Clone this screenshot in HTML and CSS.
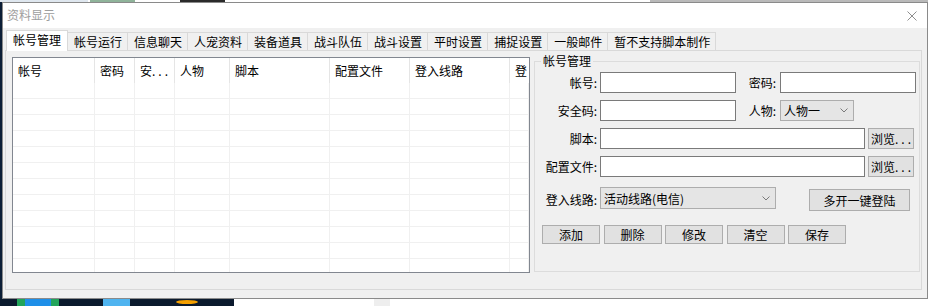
FILE: index.html
```html
<!DOCTYPE html>
<html lang="zh-CN">
<head>
    <meta charset="UTF-8">
    <meta name="viewport" content="width=device-width, initial-scale=1.0">
    <title>资料显示</title>
    <link rel="stylesheet" href="styles.css">
</head>
<body>
    <!-- desktop behind the dialog -->
    <div class="desk">
        <span class="dk dkLeft"></span>
        <span class="dk dkTop1"></span>
        <span class="dk dkTop2"></span>
        <span class="dk dkTop3"></span>
        <span class="dk dkTop4"></span>
        <span class="dk dkBottom"></span>
        <span class="dk icon1"></span>
        <span class="dk icon2"></span>
        <span class="dk icon3"></span>
        <span class="dk dkGray"></span>
    </div>

    <div class="win">
        <div class="titleBar">
            <span class="title">资料显示</span>
            <a href="javascript:;" class="close">
                <svg width="10" height="10" viewBox="0 0 10 10"><path d="M0.5 0.5L9.5 9.5M9.5 0.5L0.5 9.5" stroke="#8e8e8e" stroke-width="1" fill="none"/></svg>
            </a>
        </div>
        <ul class="tabs">
            <li class="on">帐号管理</li>
            <li>帐号运行</li>
            <li>信息聊天</li>
            <li>人宠资料</li>
            <li>装备道具</li>
            <li>战斗队伍</li>
            <li>战斗设置</li>
            <li>平时设置</li>
            <li>捕捉设置</li>
            <li>一般邮件</li>
            <li>暂不支持脚本制作</li>
        </ul>
        <div class="panel">
            <div class="listView">
                <div class="lvHead">
                    <span class="w1">帐号</span>
                    <span class="w2">密码</span>
                    <span class="w3">安<i class="dots">...</i></span>
                    <span class="w4">人物</span>
                    <span class="w5">脚本</span>
                    <span class="w6">配置文件</span>
                    <span class="w7">登入线路</span>
                    <span class="w8">登</span>
                </div>
                <div class="lvBody">
                    <span class="w1"></span>
                    <span class="w2"></span>
                    <span class="w3"></span>
                    <span class="w4"></span>
                    <span class="w5"></span>
                    <span class="w6"></span>
                    <span class="w7"></span>
                    <span class="w8"></span>
                </div>
            </div>
            <fieldset class="group">
                <legend>帐号管理</legend>
                <div class="row first">
                    <label class="lbl">帐号:</label>
                    <input type="text" class="txt">
                    <label class="lbl2">密码:</label>
                    <input type="text" class="txt">
                </div>
                <div class="row">
                    <label class="lbl">安全码:</label>
                    <input type="text" class="txt">
                    <label class="lbl2">人物:</label>
                    <div class="combo role">
                        <span>人物一</span>
                        <svg width="8" height="5" viewBox="0 0 8 5"><path d="M0.5 0.5L4 4L7.5 0.5" stroke="#7a7a7a" fill="none"/></svg>
                    </div>
                </div>
                <div class="row">
                    <label class="lbl">脚本:</label>
                    <input type="text" class="txt long">
                    <button class="btn browse">浏览<i class="dots">...</i></button>
                </div>
                <div class="row">
                    <label class="lbl">配置文件:</label>
                    <input type="text" class="txt long">
                    <button class="btn browse">浏览<i class="dots">...</i></button>
                </div>
                <div class="row lineRow">
                    <label class="lbl">登入线路:</label>
                    <div class="combo line">
                        <span>活动线路(电信)</span>
                        <svg width="8" height="5" viewBox="0 0 8 5"><path d="M0.5 0.5L4 4L7.5 0.5" stroke="#7a7a7a" fill="none"/></svg>
                    </div>
                    <button class="btn multi">多开一键登陆</button>
                </div>
                <div class="ops">
                    <button class="btn">添加</button>
                    <button class="btn">删除</button>
                    <button class="btn">修改</button>
                    <button class="btn">清空</button>
                    <button class="btn">保存</button>
                </div>
            </fieldset>
        </div>
    </div>
</body>
</html>
```

FILE: styles.css
```css
*{
    margin: 0;
    padding: 0;
    box-sizing: border-box;
}
ul{
    list-style: none;
}
a{
    text-decoration: none;
}
i{
    font-style: normal;
}
body{
    width: 932px;
    height: 306px;
    overflow: hidden;
    position: relative;
    background: #fff;
    font: 12px "Noto Sans CJK SC", "Liberation Sans", sans-serif;
    color: #000;
}

/* desktop */
.dk{
    position: absolute;
    display: block;
}
.dkLeft{ left: 0; top: 0; width: 2px; height: 306px; background: #0c1e36; }
.dkTop1{ left: 0; top: 0; width: 88px; height: 2px; background: #dfe7ef; }
.dkTop2{ left: 90px; top: 0; width: 45px; height: 2px; background: #8fb39a; }
.dkTop3{ left: 180px; top: 0; width: 45px; height: 2px; background: #2a2a2a; }
.dkTop4{ left: 650px; top: 0; width: 278px; height: 2px; background: #b9b9b9; }
.dkBottom{ left: 0; top: 299px; width: 234px; height: 7px; background: #0b1a2e; }
.icon1{ left: 17px; top: 299px; width: 42px; height: 7px; background: linear-gradient(90deg, #22a45a 0 20%, #1e8fe8 20% 80%, #22a45a 80%); }
.icon2{ left: 103px; top: 299px; width: 27px; height: 7px; background: #4fb4f0; }
.icon3{ left: 176px; top: 300px; width: 22px; height: 4px; border-radius: 50%; background: #f5a000; }
.dkGray{ left: 374px; top: 299px; width: 16px; height: 7px; background: #eee; }

/* dialog */
.win{
    position: absolute;
    left: 2px;
    top: 2px;
    width: 926px;
    height: 297px;
    border: 1px solid #8a8a8a;
    background: #f0f0f0;
}
.titleBar{
    height: 25px;
    background: #fff;
    display: flex;
    align-items: center;
    justify-content: space-between;
    padding: 0 10px 0 4px;
}
.titleBar .title{
    color: #9d9d9d;
    margin-top: -3px;
}
.titleBar .close{
    display: flex;
}

.tabs{
    display: flex;
    align-items: flex-end;
    height: 23px;
    padding-left: 3px;
    margin-bottom: -1px;
    position: relative;
    z-index: 1;
}
.tabs li{
    height: 18px;
    line-height: 17px;
    padding: 0 5px 0 6px;
    margin-bottom: 1px;
    border-top: 1px solid #d9d9d9;
    border-right: 1px solid #d9d9d9;
    background: #f0f0f0;
    white-space: nowrap;
}
.tabs li.on{
    height: 21px;
    line-height: 18px;
    padding: 0 6px;
    margin-bottom: 0;
    border-left: 1px solid #d9d9d9;
    background: #fff;
}

.panel{
    margin-left: 2px;
    width: 917px;
    height: 240px;
    border: 1px solid #d9d9d9;
    display: flex;
    align-items: flex-start;
    padding: 6px 0 0 6px;
}

/* list view */
.listView{
    flex-shrink: 0;
    width: 518px;
    height: 216px;
    border: 1px solid #828790;
    background: #fff;
    overflow: hidden;
}
.lvHead{
    display: flex;
    height: 25px;
}
.lvHead span{
    flex-shrink: 0;
    line-height: 25px;
    padding-left: 5px;
    border-right: 1px solid #e5e5e5;
    white-space: nowrap;
    overflow: hidden;
}
.lvHead .w8{
    border-right: 0;
}
.lvBody{
    display: flex;
    height: 189px;
    background: repeating-linear-gradient(#fff 0 15px, #f0f0f0 15px 16px);
}
.lvBody span{
    flex-shrink: 0;
    border-right: 1px solid #f0f0f0;
}
.w1{ width: 82px; }
.w2{ width: 40px; }
.w3{ width: 40px; }
.w4{ width: 55px; }
.w5{ width: 100px; }
.w6{ width: 80px; }
.w7{ width: 100px; }
.w8{ width: 19px; }
.dots{
    letter-spacing: 3px;
}

/* account group */
.group{
    flex-shrink: 0;
    margin: -4px 0 0 4px;
    width: 386px;
    height: 219px;
    border: 1px solid #dcdcdc;
}
.group legend{
    margin-left: 6px;
    padding: 0 2px;
    line-height: 16px;
}
.row{
    display: flex;
    align-items: center;
    height: 21px;
    margin-top: 7px;
}
.row.first{
    margin-top: 3px;
}
.lbl{
    width: 65px;
    padding-right: 3px;
    text-align: right;
}
.lbl2{
    width: 44px;
    padding-right: 4px;
    text-align: right;
}
.txt{
    width: 136px;
    height: 21px;
    border: 1px solid #7a7a7a;
    background: #fff;
    outline: none;
    font: inherit;
}
.txt.long{
    width: 265px;
}
.btn{
    height: 21px;
    border: 1px solid #adadad;
    background: #e1e1e1;
    font: inherit;
    color: #000;
}
.browse{
    width: 46px;
    margin-left: 3px;
    text-align: left;
    padding-left: 2px;
    white-space: nowrap;
}
.combo{
    display: flex;
    align-items: center;
    justify-content: space-between;
    height: 21px;
    border: 1px solid #adadad;
    background: #e5e5e5;
    padding: 0 5px 0 3px;
}
.combo.role{
    width: 74px;
}
.lineRow{
    height: 24px;
    margin-top: 10px;
    align-items: flex-start;
}
.lineRow .lbl{
    align-self: center;
}
.combo.line{
    width: 176px;
    height: 22px;
}
.multi{
    width: 101px;
    height: 22px;
    margin: 2px 0 0 33px;
}
.ops{
    display: flex;
    gap: 3.5px;
    padding-left: 7px;
    margin-top: 14px;
}
.ops .btn{
    width: 58px;
    height: 19px;
}
```
